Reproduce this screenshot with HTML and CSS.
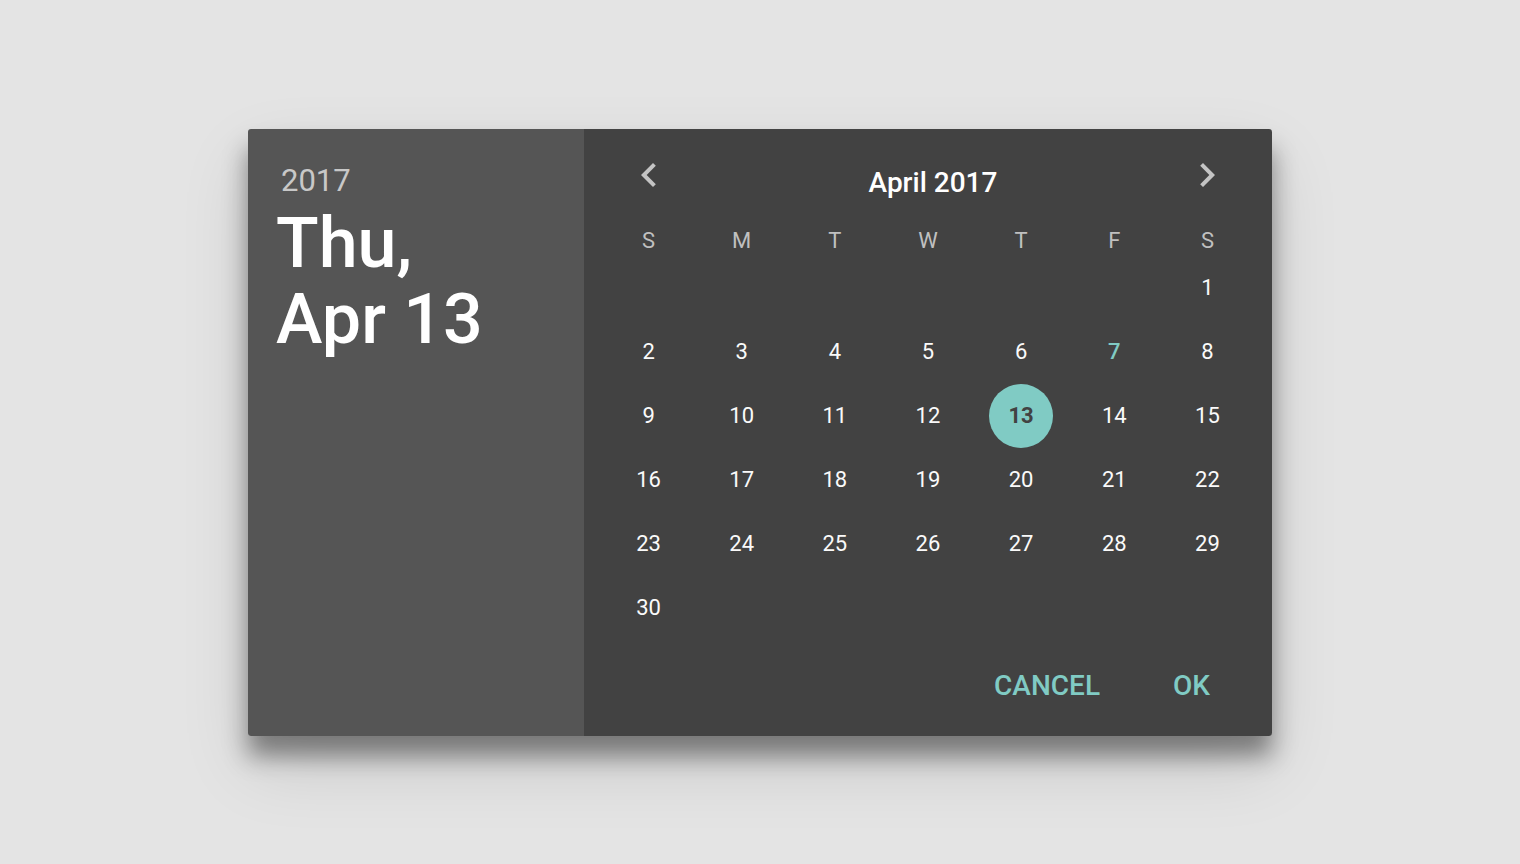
FILE: index.html
```html
<!DOCTYPE html>
<html>
<head>
    <title>Date Picker</title>
    <meta charset="UTF-8">
    <link rel="stylesheet" href="styles.css">
</head>

<body>
    <div class="dialog">
        <div class="summary">
            <div class="year">2017</div>
            <div class="date">Thu,<br>Apr 13</div>
        </div>

        <div class="calendar">
            <div class="month-bar">
                <button type="button" class="nav">
                    <svg width="48" height="48" viewBox="0 0 24 24"><path d="M15.41 7.41L14 6l-6 6 6 6 1.41-1.41L10.83 12z"/></svg>
                </button>
                <div class="month">April 2017</div>
                <button type="button" class="nav">
                    <svg width="48" height="48" viewBox="0 0 24 24"><path d="M10 6L8.59 7.41 13.17 12l-4.58 4.59L10 18l6-6z"/></svg>
                </button>
            </div>

            <div class="weekdays">
                <span>S</span><span>M</span><span>T</span><span>W</span><span>T</span><span>F</span><span>S</span>
            </div>

            <div class="days" id="days"></div>

            <div class="actions">
                <button type="button" class="action">CANCEL</button>
                <button type="button" class="action">OK</button>
            </div>
        </div>
    </div>

    <script>
        // April 2017 starts on a Saturday
        let days = document.getElementById("days");
        let firstDay = 6;
        let today = 7;
        let selected = 13;

        for (let i = 0; i < firstDay; i++) {
            days.appendChild(document.createElement("span"));
        }

        for (let d = 1; d <= 30; d++) {
            let cell = document.createElement("span");
            let num = document.createElement("span");
            num.className = "num";
            num.textContent = d;
            if (d === today) num.className += " today";
            if (d === selected) num.className += " selected";
            cell.appendChild(num);
            days.appendChild(cell);
        }
    </script>
</body>
</html>
```

FILE: styles.css
```css
body {
    margin: 0;
    height: 100vh;
    display: flex;
    align-items: center;
    justify-content: center;
    background-color: #e4e4e4;
    font-family: Roboto, "Liberation Sans", sans-serif;
}

.dialog {
    display: flex;
    width: 1024px;
    height: 607px;
    border-radius: 3px;
    overflow: hidden;
    box-shadow: 0 20px 24px rgba(0, 0, 0, 0.42),
                0 30px 70px rgba(0, 0, 0, 0.12);
}

/* left side: selected date */
.summary {
    width: 336px;
    box-sizing: border-box;
    padding: 34px 28px;
    background-color: #555555;
}

.year {
    padding-left: 5px;
    font-size: 31px;
    line-height: 36px;
    color: #c8c8c8;
}

.date {
    margin-top: 6px;
    font-size: 70px;
    line-height: 76px;
    font-weight: 500;
    color: #fff;
}

/* right side: month grid */
.calendar {
    flex: 1;
    display: flex;
    flex-direction: column;
    padding: 22px 18px 0;
    background-color: #424242;
}

.month-bar {
    display: grid;
    grid-template-columns: repeat(7, 1fr);
    height: 56px;
    align-items: start;
}

.nav {
    justify-self: center;
    padding: 0;
    border: none;
    background: none;
    cursor: pointer;
}

.nav svg {
    display: block;
    fill: #c4c4c4;
}

.month {
    grid-column: 2 / 7;
    padding: 8px 0 0 10px;
    text-align: center;
    font-size: 28px;
    line-height: 48px;
    font-weight: 500;
    color: #fff;
}

.weekdays {
    display: grid;
    grid-template-columns: repeat(7, 1fr);
    margin-top: 18px;
    font-size: 22px;
    line-height: 31px;
    text-align: center;
    color: #c0c0c0;
}

.days {
    display: grid;
    grid-template-columns: repeat(7, 1fr);
    grid-auto-rows: 64px;
}

.days > span {
    display: flex;
    align-items: center;
    justify-content: center;
}

.num {
    display: flex;
    align-items: center;
    justify-content: center;
    width: 64px;
    height: 64px;
    border-radius: 50%;
    font-size: 22px;
    color: #fafafa;
}

.num.today {
    color: #80cbc4;
    font-weight: 500;
}

.num.selected {
    background-color: #80cbc4;
    color: #424242;
    font-weight: 700;
}

.actions {
    display: flex;
    justify-content: flex-end;
    gap: 41px;
    margin-top: auto;
    padding: 0 28px 32px 0;
}

.action {
    padding: 0 16px;
    border: none;
    background: none;
    font-family: Roboto, "Liberation Sans", sans-serif;
    font-size: 28px;
    line-height: 36px;
    font-weight: 500;
    color: #80cbc4;
    cursor: pointer;
}
```
